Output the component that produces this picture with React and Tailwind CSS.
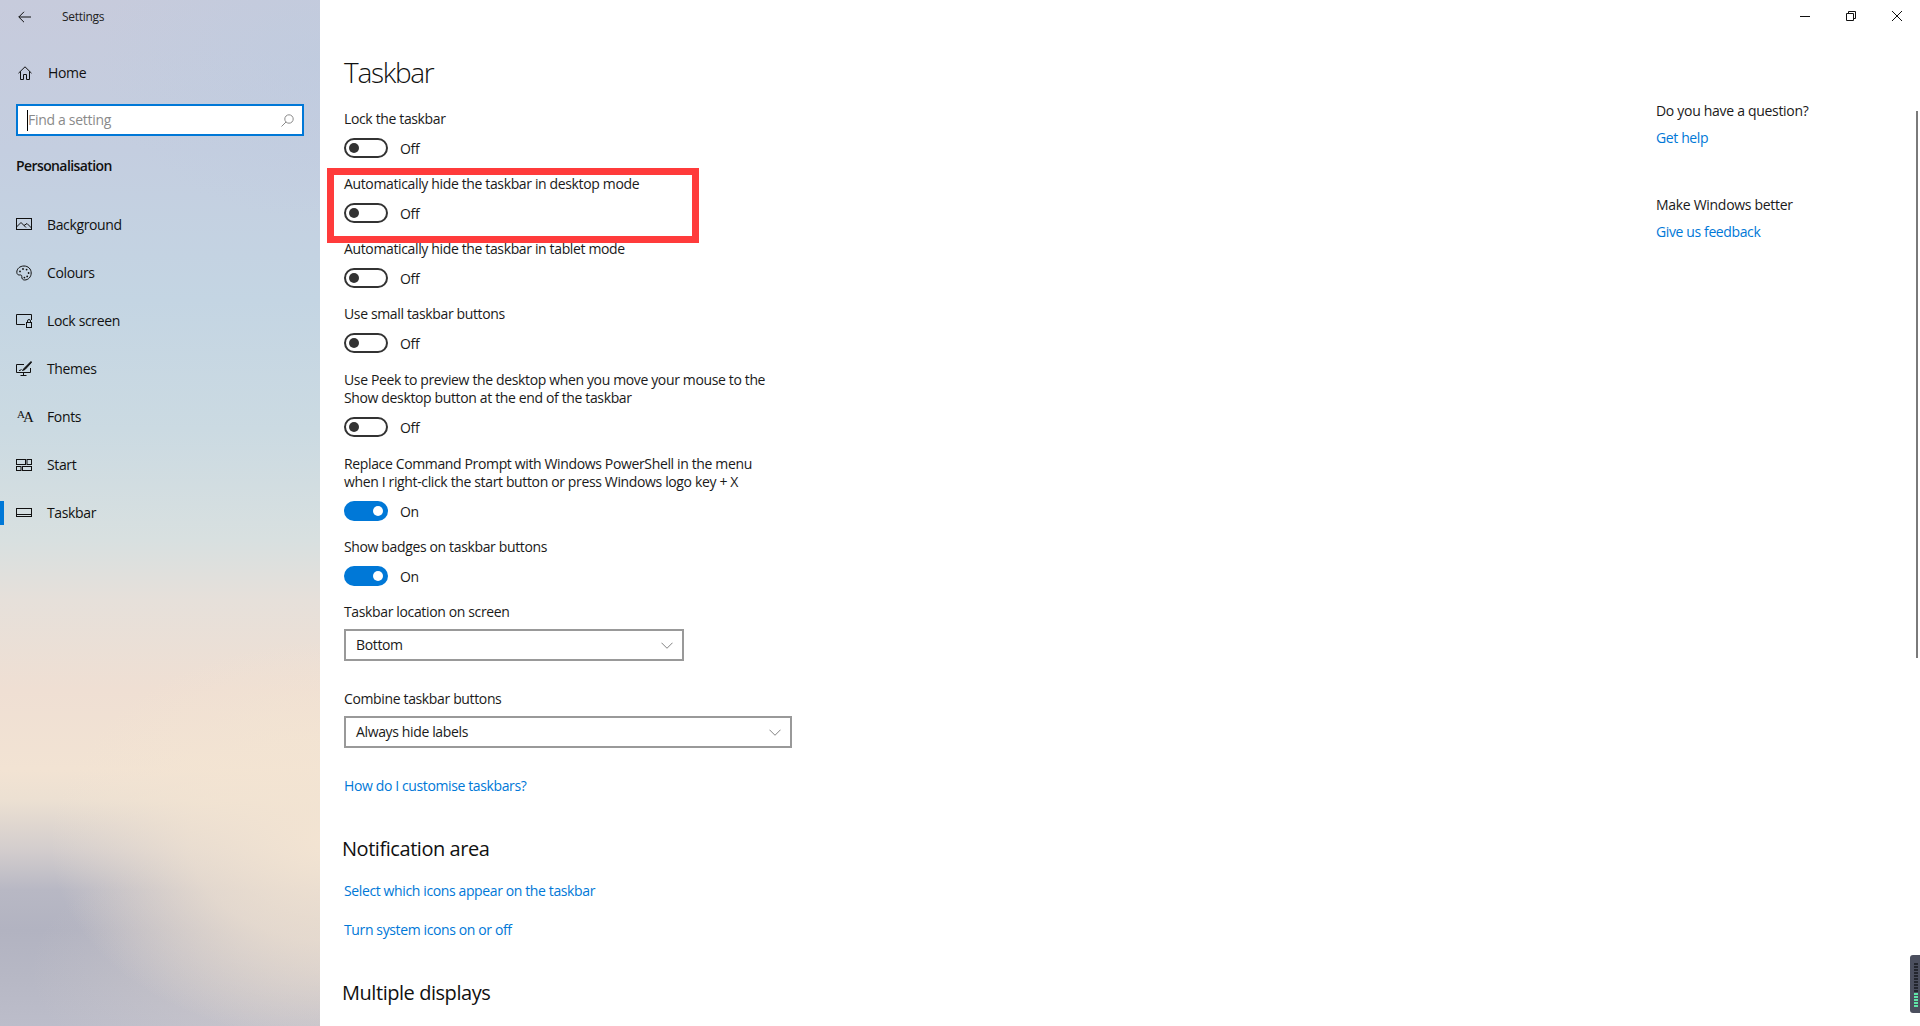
const font = "font-['Open_Sans','Noto_Sans',sans-serif]";

const Svg = ({ children, className = "w-4 h-4", vb = "0 0 16 16", stroke = "#111" }) => (
  <svg viewBox={vb} className={className} fill="none" stroke={stroke} strokeWidth="1">{children}</svg>
);

const icons = {
  Background: (
    <Svg>
      <rect x="0.5" y="1.5" width="15" height="11" />
      <path d="M0.5 10 L5 5.5 L10 10.5 M8 8.5 L11 6.5 L15.5 11" />
    </Svg>
  ),
  Colours: (
    <Svg>
      <path d="M8 1 C3.8 1 0.8 3.8 0.8 7.2 C0.8 9.4 2.4 10.2 3.8 10 C5.2 9.8 6 10.4 5.8 11.6 C5.6 13.6 6.8 15 8.6 15 C12.4 15 15.2 11.8 15.2 8 C15.2 4 12.2 1 8 1 Z" />
      <circle cx="4" cy="6.4" r="0.9" fill="#111" stroke="none" />
      <circle cx="7" cy="4" r="0.9" fill="#111" stroke="none" />
      <circle cx="10.6" cy="4.6" r="0.9" fill="#111" stroke="none" />
      <circle cx="12.6" cy="8" r="0.9" fill="#111" stroke="none" />
      <circle cx="11.2" cy="11.4" r="0.9" fill="#111" stroke="none" />
      <circle cx="8.4" cy="12.6" r="0.9" fill="#111" stroke="none" />
    </Svg>
  ),
  "Lock screen": (
    <Svg>
      <path d="M9 11.5 H0.5 V1.5 H15.5 V7" />
      <rect x="10.5" y="9.5" width="5" height="5" />
      <path d="M11.5 9.5 V8 A1.5 1.5 0 0 1 14.5 8 V9.5" />
    </Svg>
  ),
  Themes: (
    <Svg>
      <path d="M8 3.5 H0.5 V11.5 H14.5 V7" />
      <path d="M7.5 11.5 V14 M4.5 14.5 H10.5" />
      <path d="M15 0.5 L8 7.5 L6.5 9.5 L9 8.5 L15.5 1.5 Z" fill="#111" />
      <path d="M3 9.5 C4.5 9.5 5 9 5.5 8" />
    </Svg>
  ),
  Start: (
    <Svg>
      <rect x="0.5" y="2.5" width="9" height="5" />
      <rect x="11" y="2.5" width="4.5" height="5" />
      <rect x="0.5" y="9.5" width="4.5" height="4" />
      <rect x="6.5" y="9.5" width="9" height="4" />
    </Svg>
  ),
  Taskbar: (
    <Svg>
      <rect x="0.5" y="3.5" width="15" height="8" />
      <path d="M0.5 9.5 H15.5" />
    </Svg>
  ),
};

const FontsIcon = () => (
  <span className="flex items-end w-4 h-4 font-['Liberation_Serif',serif] text-[#111] leading-none">
    <span className="text-[11px] mb-[5px] ml-[1px]">A</span>
    <span className="text-[15px] -ml-[2px]">A</span>
  </span>
);

const navItems = ["Background", "Colours", "Lock screen", "Themes", "Fonts", "Start", "Taskbar"];

const NavItem = ({ label }) => (
  <div className="relative flex items-center h-12 pl-4">
    {label === "Taskbar" && <span className="absolute left-0 top-3 w-1 h-6 bg-[#0078d7]" />}
    {label === "Fonts" ? <FontsIcon /> : icons[label]}
    <span className="ml-[15px] pb-[2px] text-[14px] tracking-[-0.36px] text-[#111]">{label}</span>
  </div>
);

const Toggle = ({ on }) => (
  <div className="flex items-center">
    {on ? (
      <span className="flex items-center justify-end w-11 h-5 rounded-full bg-[#0078d7] pr-[5px]">
        <span className="w-[10px] h-[10px] rounded-full bg-white" />
      </span>
    ) : (
      <span className="flex items-center w-11 h-5 rounded-full border-2 border-[#333333] pl-[3px]">
        <span className="w-[10px] h-[10px] rounded-full bg-[#333333]" />
      </span>
    )}
    <span className="ml-3 mt-[2px] text-[14px] leading-[18px] tracking-[-0.36px] text-[#1a1a1a]">{on ? "On" : "Off"}</span>
  </div>
);

const Row = ({ children, on, className = "mb-[17px]" }) => (
  <div className={className}>
    <p className="mb-[10px] text-[14px] leading-[18px] tracking-[-0.36px] text-[#1a1a1a] whitespace-pre-line">{children}</p>
    <Toggle on={on} />
  </div>
);

const Select = ({ label, value, width, className }) => (
  <div className={className}>
    <p className="mb-2 text-[14px] leading-[18px] tracking-[-0.36px] text-[#1a1a1a]">{label}</p>
    <div className={`flex items-center justify-between h-8 border-2 border-[#999999] pl-[10px] pr-[9px] ${width}`}>
      <span className="pb-[1px] text-[14px] tracking-[-0.36px] text-[#1a1a1a]">{value}</span>
      <svg viewBox="0 0 13 7" className="w-3 h-[7px]" fill="none" stroke="#777777" strokeWidth="1">
        <path d="M0.5 0.5 L6.5 6.5 L12.5 0.5" />
      </svg>
    </div>
  </div>
);

const A = ({ children, className = "" }) => (
  <p className={`text-[14px] leading-[18px] tracking-[-0.38px] text-[#0078d7] ${className}`}>{children}</p>
);

export default function App() {
  return (
    <div className={`relative flex w-full h-screen overflow-hidden bg-white ${font}`}>
      <aside className="w-[320px] shrink-0 bg-[radial-gradient(ellipse_280px_200px_at_330px_840px,#f3e4d2_0%,#f3e4d2b0_50%,#f3e4d200_100%),radial-gradient(ellipse_300px_140px_at_330px_970px,#d9d0cc99_0%,#d9d0cc00_100%),radial-gradient(ellipse_220px_160px_at_320px_60px,#bccbe080_0%,#bccbe000_100%),linear-gradient(180deg,#c7cbdc_0px,#c4cee0_150px,#c4d5e3_300px,#cbdae2_430px,#d8e0e0_540px,#e6e0da_600px,#efdfd3_690px,#f2e3d3_770px,#ece0d2_800px,#d3cdcd_850px,#b8b8c4_890px,#b2b3c1_930px,#b7b8c5_980px,#bcbdca_1026px)]">
        <div className="flex items-center h-[34px] pl-[18px]">
          <Svg className="w-[13px] h-[13px]" vb="0 0 13 13">
            <path d="M6 0.8 L0.8 6 L6 11.2 M0.8 6 H13" />
          </Svg>
          <span className="ml-[31px] text-[12px] tracking-[-0.3px] text-[#222]">Settings</span>
        </div>
        <div className="flex items-center h-[22px] mt-7 pl-[18px]">
          <Svg className="w-[14px] h-[14px]" vb="0 0 14 14">
            <path d="M0.5 7.2 L7 0.8 L13.5 7.2 M2.5 5.4 V13.5 H5.5 V8.5 H8.5 V13.5 H11.5 V5.4" />
          </Svg>
          <span className="ml-4 pb-[2px] text-[14px] tracking-[-0.36px] text-[#111]">Home</span>
        </div>
        <div className="flex items-center justify-between mx-4 mt-5 h-8 border-2 border-[#0078d7] bg-white pl-[10px] pr-2">
          <span className="relative pb-[2px] text-[14px] tracking-[-0.3px] text-[#8a8a8a]">
            <span className="absolute -left-[1px] top-[1px] bottom-[1px] w-px bg-black" />
            Find a setting
          </span>
          <svg viewBox="0 0 13 13" className="w-[13px] h-[13px]" fill="none" stroke="#8a8a8a" strokeWidth="1">
            <circle cx="8" cy="5" r="4.2" />
            <path d="M5 8 L0.5 12.5" />
          </svg>
        </div>
        <p className="ml-4 mt-[19px] text-[14px] leading-[22px] font-semibold tracking-[-0.6px] text-[#111]">Personalisation</p>
        <nav className="mt-6">
          {navItems.map((n) => (
            <NavItem key={n} label={n} />
          ))}
        </nav>
      </aside>

      <main className="w-[1336px] shrink-0 pl-6 pt-[52px]">
        <h1 className="mb-[18px] text-[28px] leading-[40px] font-light tracking-[-1.3px] text-[#111]">Taskbar</h1>
        <Row>Lock the taskbar</Row>
        <Row>Automatically hide the taskbar in desktop mode</Row>
        <Row>Automatically hide the taskbar in tablet mode</Row>
        <Row className="mb-[18px]">Use small taskbar buttons</Row>
        <Row className="mb-[18px]">{"Use Peek to preview the desktop when you move your mouse to the\nShow desktop button at the end of the taskbar"}</Row>
        <Row on>{"Replace Command Prompt with Windows PowerShell in the menu\nwhen I right-click the start button or press Windows logo key + X"}</Row>
        <Row on>Show badges on taskbar buttons</Row>
        <Select label="Taskbar location on screen" value="Bottom" width="w-[340px]" className="mb-[29px]" />
        <Select label="Combine taskbar buttons" value="Always hide labels" width="w-[448px]" className="mb-[29px]" />
        <A>How do I customise taskbars?</A>
        <h2 className="mt-10 -ml-[2px] text-[20px] leading-[28px] tracking-[-0.45px] text-[#111]">Notification area</h2>
        <A className="mt-[19px]">Select which icons appear on the taskbar</A>
        <A className="mt-[21px]">Turn system icons on or off</A>
        <h2 className="mt-10 -ml-[2px] text-[20px] leading-[28px] tracking-[-0.45px] text-[#111]">Multiple displays</h2>
      </main>

      <section className="flex-1 relative pt-[102px]">
        <p className="text-[14px] leading-[18px] tracking-[-0.3px] text-[#1a1a1a]">Do you have a question?</p>
        <A className="mt-[9px]">Get help</A>
        <p className="mt-[49px] text-[14px] leading-[18px] tracking-[-0.3px] text-[#1a1a1a]">Make Windows better</p>
        <A className="mt-[9px]">Give us feedback</A>
      </section>

      {/* window controls */}
      <div className="absolute right-[18px] top-[11px] flex items-center gap-9">
        <svg viewBox="0 0 10 10" className="w-[10px] h-[10px]" fill="none" stroke="#111"><path d="M0 5.5 H10" /></svg>
        <svg viewBox="0 0 10 10" className="w-[10px] h-[10px]" fill="none" stroke="#111"><path d="M2.5 2.5 V0.5 H9.5 V7.5 H7.5 M0.5 2.5 H7.5 V9.5 H0.5 Z" /></svg>
        <svg viewBox="0 0 10 10" className="w-[10px] h-[10px]" fill="none" stroke="#111"><path d="M0 0 L10 10 M10 0 L0 10" /></svg>
      </div>

      {/* scrollbar thumb */}
      <div className="absolute left-[1916px] top-[111px] w-[2px] h-[547px] bg-[#7a7a7a]" />

      {/* annotation */}
      <div className="absolute left-[327px] top-[168px] w-[372px] h-[75px] border-[7px] border-[#ff3b3b]" />

      {/* meter widget at the screen edge */}
      <div className="absolute right-0 top-[955px] flex flex-col gap-[1px] w-[10px] h-[58px] rounded-l-[3px] bg-[#4b4f5e] pl-1 pt-2">
        {Array.from({ length: 15 }).map((_, i) => (
          <span key={i} className={`w-1 h-[2px] ${i > 9 ? "bg-[#5fe6a8]" : "bg-[#23262e]"}`} />
        ))}
      </div>
    </div>
  );
}
